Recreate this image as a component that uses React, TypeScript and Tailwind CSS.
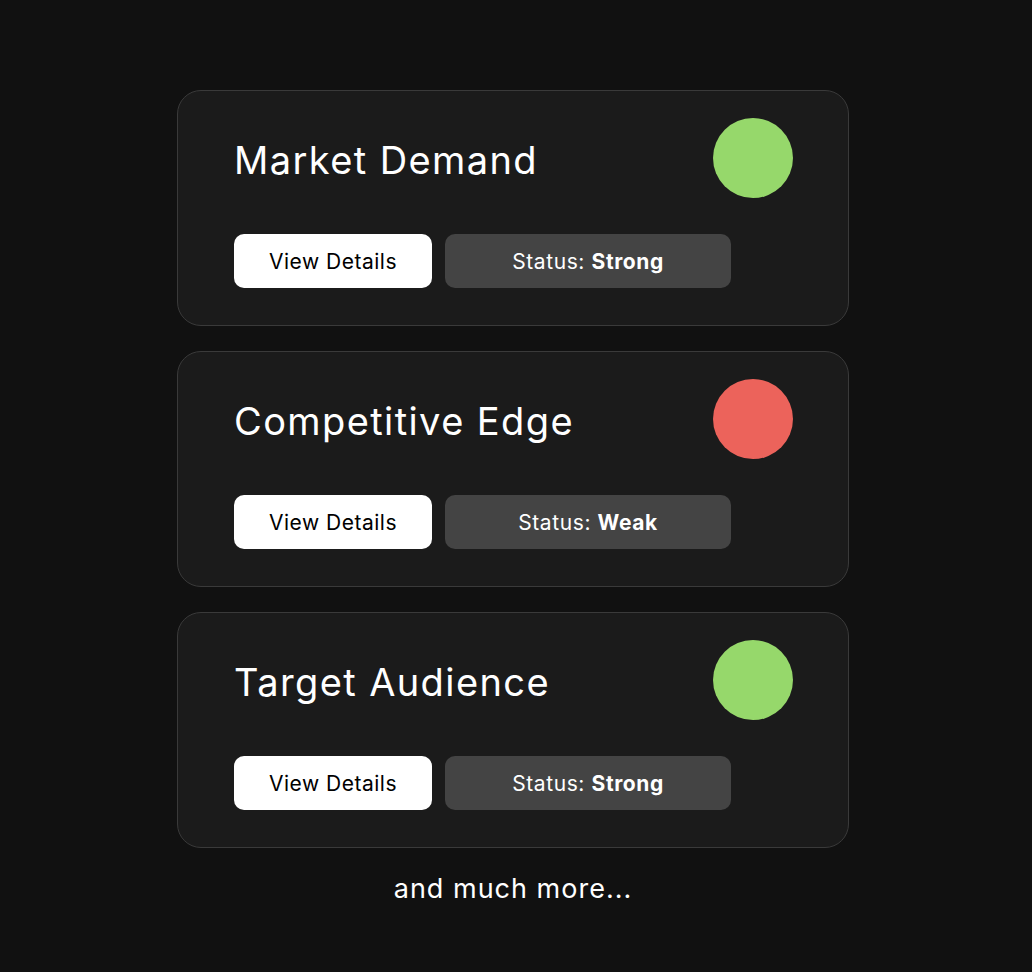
import React from "react";

type Item = { title: string; status: string; color: string };

const items: Item[] = [
  { title: "Market Demand", status: "Strong", color: "bg-[#96d86b]" },
  { title: "Competitive Edge", status: "Weak", color: "bg-[#ec635b]" },
  { title: "Target Audience", status: "Strong", color: "bg-[#96d86b]" },
];

function Card({ item }: { item: Item }) {
  return (
    <div className="w-[672px] h-[236px] rounded-[24px] border border-[#3a3a3a] bg-[#1b1b1b] pl-[56px] pr-[55px] pt-[27px] flex flex-col">
      <div className="flex items-center justify-between h-[80px]">
        <h2 className="text-[38px] leading-none text-white font-normal tracking-[1.4px] pt-[4px]">{item.title}</h2>
        <div className={`w-[80px] h-[80px] rounded-full ${item.color}`} />
      </div>
      <div className="flex gap-[13px] mt-[36px]">
        <button className="w-[198px] h-[54px] rounded-[10px] bg-white text-black text-[21px] tracking-[0.5px] pt-[1px]">
          View Details
        </button>
        <div className="w-[286px] h-[54px] rounded-[10px] bg-[#444444] text-white text-[21px] tracking-[0.6px] flex items-center justify-center pt-[1px]">
          <span>
            Status: <span className="font-bold">{item.status}</span>
          </span>
        </div>
      </div>
    </div>
  );
}

export default function App() {
  return (
    <div
      className="min-h-[972px] w-full bg-[#111111] flex flex-col items-center pt-[90px]"
      style={{ fontFamily: "Inter, 'Noto Sans', sans-serif" }}
    >
      <div className="flex flex-col items-center gap-[25px] mr-[6px]">
        {items.map((it) => (
          <Card key={it.title} item={it} />
        ))}
        <p className="mt-[1px] pt-[1px] text-[27px] text-white leading-none tracking-[1px]">and much more...</p>
      </div>
    </div>
  );
}
